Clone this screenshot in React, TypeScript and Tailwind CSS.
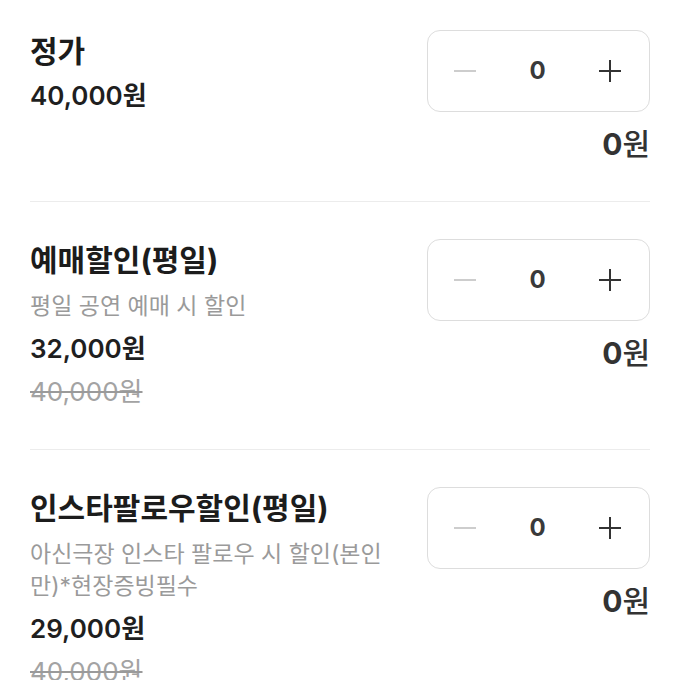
interface TicketOptionProps {
  title: string
  description?: string
  price: string
  originalPrice?: string
  first?: boolean
}

function Stepper() {
  return (
    <div className="w-[223px] h-[82px] rounded-[13px] border border-[#dddddd] flex items-center justify-between pl-[26px] pr-[28px]">
      <svg width="22" height="22" viewBox="0 0 22 22" className="text-[#c8c8c8]">
        <path d="M0 11h22" stroke="currentColor" strokeWidth="1.8" />
      </svg>
      <span className="text-[24px] font-bold text-[#3a3a3a] leading-none">0</span>
      <svg width="22" height="22" viewBox="0 0 22 22" className="text-[#333333]">
        <path d="M0 11h22M11 0v22" stroke="currentColor" strokeWidth="2" />
      </svg>
    </div>
  )
}

function TicketOption({ title, description, price, originalPrice, first }: TicketOptionProps) {
  return (
    <div className={`flex justify-between items-start pb-[39px] ${first ? "pt-[30px]" : "pt-[37px]"}`}>
      <div className="w-[372px] flex flex-col">
        <h2 className="text-[30px] leading-[42px] font-bold text-[#1c1c1c]">{title}</h2>
        {description && (
          <p className="mt-[9px] text-[23px] leading-[32px] text-[#9a9a9a]">{description}</p>
        )}
        <p className={`${description ? "mt-[9px]" : "mt-[6px]"} text-[26px] leading-[36px] font-semibold text-[#1f1f1f]`}>{price}</p>
        {originalPrice && (
          <p className="mt-[6px] text-[26px] leading-[37px] text-[#a3a3a3] line-through decoration-[#9a9a9a]">{originalPrice}</p>
        )}
      </div>
      <div className="flex flex-col items-end">
        <Stepper />
        <p className="mt-[14px] text-[30px] leading-[36px] text-[#333333]">
          <span className="font-bold">0</span>
          <span className="font-medium">원</span>
        </p>
      </div>
    </div>
  )
}

export default function App() {
  return (
    <div
      className="w-[680px] h-[680px] overflow-hidden bg-white px-[30px]"
      style={{ fontFamily: '"Inter", "Noto Sans CJK KR", sans-serif' }}
    >
      <TicketOption first title="정가" price="40,000원" />
      <div className="h-px bg-[#ececec]" />
      <TicketOption
        title="예매할인(평일)"
        description="평일 공연 예매 시 할인"
        price="32,000원"
        originalPrice="40,000원"
      />
      <div className="h-px bg-[#ececec]" />
      <TicketOption
        title="인스타팔로우할인(평일)"
        description="아신극장 인스타 팔로우 시 할인(본인만)*현장증빙필수"
        price="29,000원"
        originalPrice="40,000원"
      />
    </div>
  )
}
